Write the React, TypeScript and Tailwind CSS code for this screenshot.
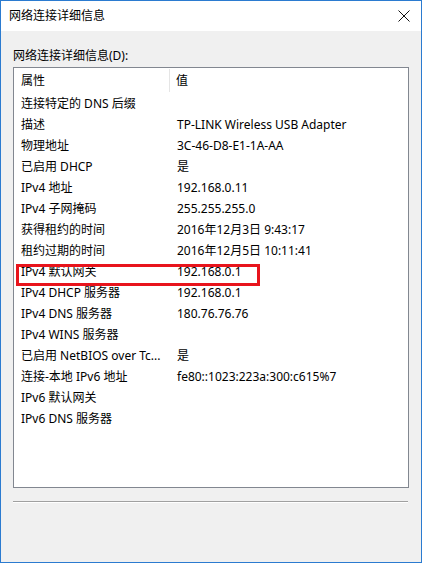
import React from "react";

const rows: [string, string][] = [
  ["连接特定的 DNS 后缀", ""],
  ["描述", "TP-LINK Wireless USB Adapter"],
  ["物理地址", "3C-46-D8-E1-1A-AA"],
  ["已启用 DHCP", "是"],
  ["IPv4 地址", "192.168.0.11"],
  ["IPv4 子网掩码", "255.255.255.0"],
  ["获得租约的时间", "2016年12月3日 9:43:17"],
  ["租约过期的时间", "2016年12月5日 10:11:41"],
  ["IPv4 默认网关", "192.168.0.1"],
  ["IPv4 DHCP 服务器", "192.168.0.1"],
  ["IPv4 DNS 服务器", "180.76.76.76"],
  ["IPv4 WINS 服务器", ""],
  ["已启用 NetBIOS over Tc...", "是"],
  ["连接-本地 IPv6 地址", "fe80::1023:223a:300:c615%7"],
  ["IPv6 默认网关", ""],
  ["IPv6 DNS 服务器", ""],
];

export default function App() {
  return (
    <div
      className="relative w-[422px] h-[563px] border border-[#2b7bd0] bg-[#f0f0f0] flex flex-col text-[12px] text-[#000] leading-[16px]"
      style={{ fontFamily: '"Noto Sans", "Noto Sans CJK SC", sans-serif' }}
    >
      <div className="h-[30px] bg-white flex items-center justify-between pl-[8px] pr-[10px]">
        <span>网络连接详细信息</span>
        <svg width="12" height="12" viewBox="0 0 12 12" className="mr-[1px]">
          <path d="M0.5 0.5 L11.5 11.5 M11.5 0.5 L0.5 11.5" stroke="#111" strokeWidth="1" fill="none" />
        </svg>
      </div>
      <div className="flex flex-col px-[12px]">
        <div className="h-[36px] flex items-end pb-[3px]">网络连接详细信息(D):</div>
        <div className="h-[421px] border border-[#828790] bg-white flex flex-col">
          <div className="h-[24px] flex items-center shrink-0 pt-[1px]">
            <div className="w-[156px] pl-[7px] h-full flex items-center border-r border-[#e5e5e5]">属性</div>
            <div className="pl-[6px]">值</div>
          </div>
          {rows.map(([k, v], i) => (
            <div key={i} className="h-[21px] flex items-center shrink-0 pt-[2px]">
              <div className="w-[156px] pl-[7px] whitespace-nowrap overflow-hidden">{k}</div>
              <div className="pl-[7px] whitespace-nowrap">{v}</div>
            </div>
          ))}
        </div>
        <div className="mt-[13px] h-[2px] border-t border-[#a0a0a0] border-b border-b-white mr-[1px]" />
      </div>
      <div className="absolute left-[15px] top-[263px] w-[244px] h-[22px] border-[3px] border-[#e8141c]" />
    </div>
  );
}
